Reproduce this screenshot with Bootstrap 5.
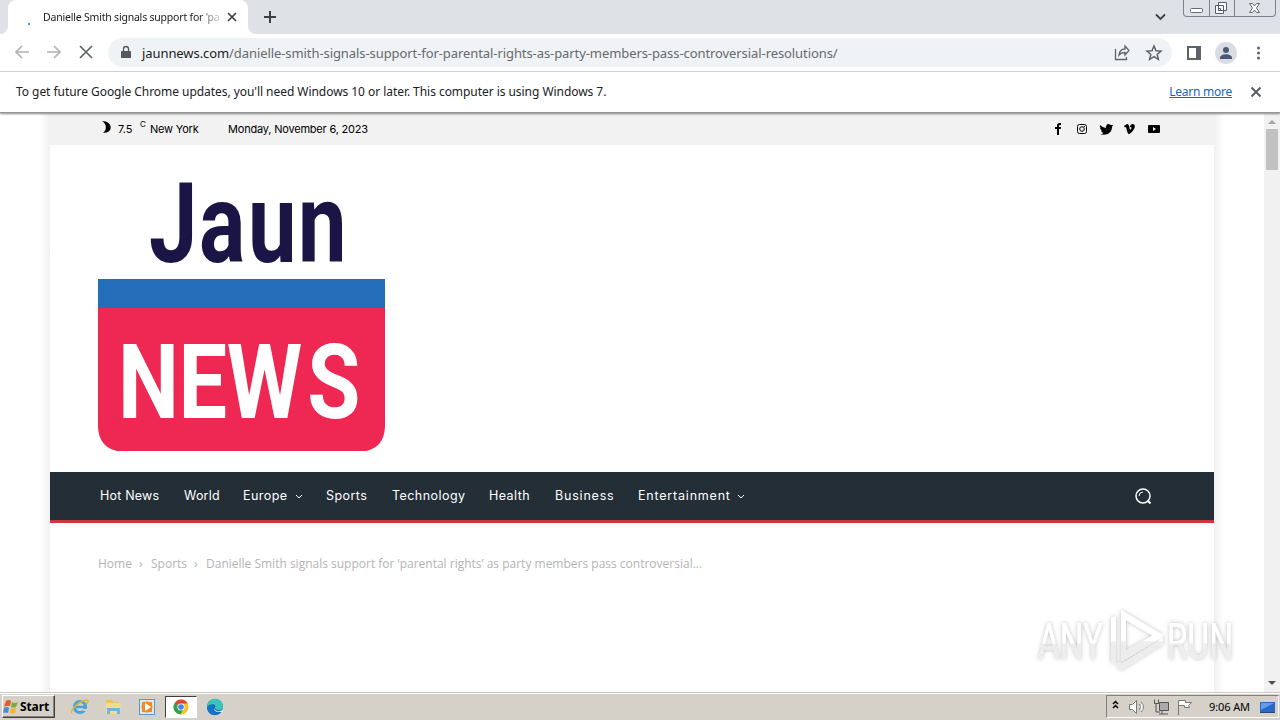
<!DOCTYPE html>
<html lang="en">
<head>
    <meta charset="UTF-8">
    <meta name="viewport" content="width=device-width, initial-scale=1.0">
    <title>Jaun News</title>
    <link href="https://cdn.jsdelivr.net/npm/bootstrap@5.3.2/dist/css/bootstrap.min.css" rel="stylesheet">
    <style>
        body {
            width: 1280px;
            height: 720px;
            overflow: hidden;
            background: #fff;
            font-family: "Noto Sans", sans-serif;
            font-size: 12px;
            line-height: 16px;
            color: #202124;
            white-space: nowrap;
        }
        svg { display: block; flex: none; overflow: visible; }

        /* browser window */
        .tab-strip { height: 34px; background: #dee1e6; }
        .browser-tab { width: 240px; height: 34px; background: #fff; border-radius: 8px 8px 0 0; padding: 0 8px 0 16px; }
        .tab-title { width: 179px; font-size: 10.5px; letter-spacing: -.2px; -webkit-mask-image: linear-gradient(90deg, #000 156px, rgba(0, 0, 0, .25) 175px); }
        .window-btns { width: 93px; height: 17px; border: 1px solid #7e828a; border-top: 0; border-radius: 0 0 4px 4px; margin-right: 4px; }
        .window-btns > div { height: 16px; }
        .window-btns > div + div { border-left: 1px solid #7e828a; }
        .toolbar { height: 38px; border-bottom: 1px solid #d5d7da; }
        .address { width: 1064px; height: 29px; background: #f0f3f5; border-radius: 15px; margin-left: 14px; padding: 0 8px 0 12px; font-size: 13px; color: #66696d; }
        .address-text { letter-spacing: -.08px; margin-left: 10px; }
        .address-text b { font-weight: 400; color: #202124; }
        .side-panel { margin-left: 15px; }
        .avatar { width: 22px; height: 22px; border-radius: 50%; background: #dadce4; overflow: hidden; margin-left: 14px; }
        .update-bar { height: 41px; padding-left: 16px; border-bottom: 1px solid #969696; font-size: 12px; letter-spacing: -.05px; box-shadow: 0 1px 2px #0007; z-index: 2; position: relative; }
        .update-bar a { color: #1967c0; letter-spacing: -.25px; }

        /* page */
        .viewport { height: 579px; overflow: hidden; background: #fff; }
        .side-shade { width: 50px; background: linear-gradient(90deg, #fff 40px, #f1f1f1 50px); }
        .side-shade.end { background: linear-gradient(270deg, #fff 40px, #f1f1f1 50px); }
        .site { width: 1164px; }
        .top-line { height: 32px; background: #f2f2f2; padding: 0 54px 0 52px; font-family: Inter, sans-serif; font-size: 11px; color: #000; letter-spacing: -.2px; }
        .weather { width: 22px; margin-left: 7px; letter-spacing: 0; }
        .degree { width: 10px; font-size: 8px; top: -5px; }
        .city { width: 78px; }
        .brand-area { height: 327px; padding: 14px 0 0 48px; }
        .site-nav { height: 51px; background: #242e36; border-bottom: 3px solid #d03638; padding: 0 62px 0 50px; font-family: Inter, sans-serif; font-size: 12.5px; color: #fff; }
        .nav-items { display: grid; grid-template-columns: 84px 59px 83px 66px 97px 66px 83px 110px; letter-spacing: .45px; }
        .nav-items .wider { letter-spacing: .8px; }
        .nav-items .tighter { letter-spacing: .2px; }
        .crumbs { margin: 33px 0 0 48px; font-family: "Open Sans", sans-serif; font-size: 12px; color: #b4b4b4; }
        .crumb-home { width: 41px; }
        .crumb-sport { width: 43px; }
        .crumb-sep { width: 12px; }
        .scroll-track { width: 16px; background: #f1f1f1; }
        .scroll-thumb { width: 12px; height: 41px; background: #c1c1c1; }
        .watermark { position: absolute; left: 1030px; top: 600px; }

        /* taskbar */
        .taskbar { height: 28px; background: #d5d0c8; border-top: 1px solid #c8c8c4; box-shadow: inset 0 1px #fff; padding: 0 1px 0 2px; }
        .start-btn { width: 53px; height: 23px; border: 1px solid; border-color: #fff #404040 #404040 #fff; box-shadow: inset -1px -1px #878480; font-size: 12px; font-weight: 700; color: #000; letter-spacing: -.1px; }
        .active-task { width: 32px; height: 22px; background: #fff; border: 1px solid; border-color: #404040 #fff #fff #404040; }
        .tray { width: 173px; height: 23px; border: 1px solid; border-color: #85827c #fff #fff #85827c; padding: 0 2px 0 6px; font-size: 11px; color: #000; }
        .clock { margin-left: 4px; letter-spacing: -.1px; }
    </style>
</head>
<body class="d-flex flex-column">
    <header>
        <div class="tab-strip d-flex">
            <div class="d-flex align-items-end"><svg width="8" height="8"><path d="M8 0v8H0a8 8 0 0 0 8-8z" fill="#fff"/></svg></div>
            <div class="browser-tab d-flex align-items-center">
                <svg width="19" height="34"><path d="M4 23h2v2H4z" fill="#4a94dd"/></svg>
                <div class="tab-title">Danielle Smith signals support for 'pa</div>
                <svg class="ms-auto" width="16" height="34"><path d="m4 13 8 8m0-8-8 8" stroke="#3c4043" stroke-width="1.7"/></svg>
            </div>
            <div class="d-flex align-items-end"><svg width="8" height="8"><path d="M0 0v8h8a8 8 0 0 1-8-8z" fill="#fff"/></svg></div>
            <svg width="28" height="34"><path d="M14 11v12M8 17h12" stroke="#3c4043" stroke-width="2"/></svg>
            <svg class="ms-auto" width="14" height="34"><path d="m3 14.500 4.500 4.500 4.500-4.500" fill="none" stroke="#3c4043" stroke-width="1.8"/></svg>
            <div class="window-btns d-flex ms-3">
                <div><svg width="25" height="16"><rect x="6.500" y="8.500" width="12" height="4" rx="1" fill="#fff" stroke="#656a75"/></svg></div>
                <div><svg width="24" height="16"><path d="M8.500 2.500h8v8h-8zM5.500 5.500h8v8h-8z" fill="#fff" stroke="#555b68"/><path d="M8.500 8.500h2v2h-2z" fill="none" stroke="#555b68"/></svg></div>
                <div><svg width="41" height="16"><path d="M14.500 3.500h3l2 2.500 2-2.500h3l-3 4.500 3 4.500h-3l-2-2.500-2 2.500h-3l3-4.500z" fill="#fff" stroke="#656a75"/></svg></div>
            </div>
        </div>
        <div class="toolbar d-flex align-items-center">
            <svg width="94" height="37" fill="none" stroke-width="1.7">
                <path d="M29 18H16m6-6-6 6 6 6M47 18h13m-6-6 6 6-6 6" stroke="#b1b3b5"/>
                <path d="m80 12 12 12m0-12L80 24" stroke="#5f6368"/>
            </svg>
            <div class="address d-flex align-items-center">
                <svg width="12" height="16"><path d="M2 6h8q1 0 1 1v6H1V7q0-1 1-1z" fill="#55585c"/><path d="M3.500 7V4a2.500 2.500 0 0 1 5 0v3" fill="none" stroke="#55585c" stroke-width="1.300"/></svg>
                <div class="address-text"><b>jaunnews.com</b>/danielle-smith-signals-support-for-parental-rights-as-party-members-pass-controversial-resolutions/</div>
                <svg class="ms-auto" width="50" height="20" fill="none" stroke="#5f6368" stroke-width="1.300">
                    <path d="M1.500 6v10.500h11V14M5 12c.5-4 3-6 6-6V3l4 4.500-4 4.500V9.500C8 9.500 6.500 10 5 12z"/>
                    <path d="m40 3 2 4.700 5 .4-3.800 3.300 1.200 4.900L40 13.600l-4.400 2.700 1.200-4.900L33 8.100l5-.4z" stroke-width="1.500"/>
                </svg>
            </div>
            <svg class="side-panel" width="14" height="14"><path d="M1 1h12v12H1z" fill="none" stroke="#5f6368" stroke-width="2"/><path d="M9 1h4v12H9z" fill="#5f6368"/></svg>
            <div class="avatar"><svg width="22" height="22" fill="#4c5975"><circle cx="11" cy="8" r="3"/><path d="M5 16c0-5 12-5 12 0v1H5z"/></svg></div>
            <svg class="ms-auto" width="34" height="20" fill="#5f6368"><circle cx="12.500" cy="5" r="1.500"/><circle cx="12.500" cy="10" r="1.500"/><circle cx="12.500" cy="15" r="1.500"/></svg>
        </div>
        <div class="update-bar d-flex align-items-center bg-white">
            <span>To get future Google Chrome updates, you'll need Windows 10 or later. This computer is using Windows 7.</span>
            <a class="ms-auto" href="#">Learn more</a>
            <svg width="48" height="20"><path d="m19.500 5.500 9 9m0-9-9 9" stroke="#55585c" stroke-width="1.800"/></svg>
        </div>
    </header>

    <div class="viewport d-flex">
        <div class="side-shade"></div>
        <main class="site">
            <div class="top-line d-flex align-items-center">
                <svg width="9" height="16"><path d="M0 0c11 0 12 12 1 12 4-3 4-9-1-12z"/></svg>
                <span class="weather">7.5</span><sup class="degree">C</sup><span class="city">New York</span>
                <span>Monday, November 6, 2023</span>
                <svg class="ms-auto" width="110" height="16">
                    <path d="M7 14V8H5V6h2V4.500Q7 2 9.500 2H11v2h-1q-1 0-1 1v1h2l-.3 2H9v6z"/>
                    <rect x="27.500" y="3.500" width="9" height="9" rx="2" fill="none" stroke="#000"/><circle cx="32" cy="8" r="2.300" fill="none" stroke="#000"/><path d="M34 5h1v1h-1z"/>
                    <path d="M50 4q3 3 6 3c-.5-4 3-5 4.500-3H63l-1 2c0 7-7 9-12 7 2 0 3-.5 3.500-1Q51 11 51 9.500h1.300Q50 8.500 50 7l1 .3Q49 6 50 4z"/>
                    <path d="m74 5 3-2q2 0 2.500 4l.7 2 1.300-2-.5-1-1.200.3C80 4 81.500 3 83 3c4 1 1 7-3.500 10Q78 14 77 10l-1-4-1 .5z"/>
                    <path fill-rule="evenodd" d="M99 4h10q1 0 1 1v6q0 1-1 1H99q-1 0-1-1V5q0-1 1-1zm4 2v4l3-2z"/>
                </svg>
            </div>
            <div class="brand-area">
                <svg width="288" height="306" viewBox="98 159 288 306" font-family="Roboto, sans-serif" font-weight="700">
                    <text transform="translate(149 262) scale(.78 1)" x="0 64 127 191" font-size="111" fill="#1b1545">Jaun</text>
                    <path d="M98 279h287v148q-1 20-19 24H117q-18-4-19-24z" fill="#ef2853"/>
                    <path d="M98 279h287v29H98z" fill="#246db8"/>
                    <text transform="translate(118 418) scale(.83 1)" x="0 73 131 228" font-size="104" fill="#fff">NEWS</text>
                </svg>
            </div>
            <nav class="site-nav d-flex align-items-center">
                <div class="nav-items">
                    <span class="tighter">Hot News</span><span class="tighter">World</span>
                    <span class="d-flex align-items-center">Europe<svg class="ms-2" width="6" height="16"><path d="m0 7 3 3 3-3" fill="none" stroke="#fff"/></svg></span>
                    <span>Sports</span><span>Technology</span><span>Health</span><span class="wider">Business</span>
                    <span class="wider d-flex align-items-center">Entertainment<svg class="ms-2" width="6" height="16"><path d="m-1 7 3 3 3-3" fill="none" stroke="#fff"/></svg></span>
                </div>
                <svg class="ms-auto" width="18" height="18" fill="none" stroke="#fff"><circle cx="9" cy="9" r="7" stroke-width="1.500"/><path d="m13.500 13.500 3 3" stroke-width="2"/><path d="M5 9q0-4 4-4"/></svg>
            </nav>
            <div class="crumbs d-flex">
                <span class="crumb-home">Home</span><span class="crumb-sep">›</span><span class="crumb-sport">Sports</span><span class="crumb-sep">›</span>
                <span>Danielle Smith signals support for ‘parental rights’ as party members pass controversial...</span>
            </div>
        </main>
        <div class="side-shade end"></div>
        <div class="scroll-track d-flex flex-column align-items-center">
            <svg width="16" height="16"><path d="m4 11 4-4 4 4z" fill="#a3a3a3"/></svg>
            <div class="scroll-thumb"></div>
            <svg class="mt-auto" width="16" height="18"><path d="m4 7 4 4 4-4z" fill="#505050"/></svg>
        </div>
    </div>

    <svg class="watermark" width="210" height="80">
        <defs>
            <filter id="soft" x="-10%" y="-20%" width="120%" height="140%"><feDropShadow dx="0" dy="0" stdDeviation="2" flood-color="#000" flood-opacity=".28"/></filter>
            <linearGradient id="fade" x1="0" y1="0" x2="0" y2="1"><stop offset=".52" stop-color="#fff"/><stop offset=".53" stop-color="#ededed"/></linearGradient>
        </defs>
        <g filter="url(#soft)" fill="url(#fade)">
            <text x="8" y="59" font-family="Roboto, sans-serif" font-size="50" textLength="65" lengthAdjust="spacingAndGlyphs">ANY</text>
            <text x="137" y="59" font-family="Roboto, sans-serif" font-size="50" textLength="66" lengthAdjust="spacingAndGlyphs">RUN</text>
            <path d="M86 16v48l-5-3V18zM91 10l42 25-3 5-34-20v37l-5 4zM97 50l30-17 6 4-42 25v-5zM86 64l5 6 42-26v-6L91 64v-2z"/>
        </g>
    </svg>

    <footer class="taskbar d-flex align-items-center">
        <div class="start-btn d-flex align-items-center">
            <svg width="17" height="17"><path d="M3 3q3-2 5 0L7 8Q4 7 1 9z" fill="#e55a2b"/><path d="M9 4q3 2 6 0l-2 5q-3 1-5 0z" fill="#79ad37"/><path d="M1 10q3-2 5 0l-1 5q-2-1-5 0z" fill="#4a8bd0"/><path d="M8 10q2 1 5 0l-1 5q-3 1-5 0z" fill="#efb72e"/></svg>
            <span>Start</span>
        </div>
        <svg width="110" height="22">
            <circle cx="25" cy="11" r="5.500" fill="none" stroke="#43a5dd" stroke-width="3.200"/><path d="M20 11h12" stroke="#43a5dd" stroke-width="2.500"/><path d="M28 13h5v2h-5z" fill="#d5d0c8"/><path d="M17 17c-3-1 6-12 15-13 2 0 1 3-1 4" fill="none" stroke="#e4b52e" stroke-width="1.500"/>
            <path d="M51 4h6l1 2h6v3H51z" fill="#e9c550"/><path d="M51 7h15l-1 11H51z" fill="#f6dd85"/><path d="M52 12h13v6h-3v-3h-7v3h-3z" fill="#72b5d9"/>
            <rect x="84.500" y="3.500" width="15" height="15" fill="#d8e8f5" stroke="#5b94cf"/><path d="M87 6h10v10H87z" fill="#ef8c22"/><circle cx="92" cy="11" r="5.500" fill="#ef8c22"/><path d="m90 7 6 4-6 4z" fill="#fff"/>
        </svg>
        <div class="active-task d-flex align-items-center justify-content-center">
            <svg width="16" height="16"><circle cx="8" cy="8" r="7.500" fill="#f4c428"/><path d="M8 8 1.500 4.200A7.500 7.500 0 0 1 14.700 4.500H8z" fill="#df4637"/><path d="M1.500 4.200A7.500 7.500 0 0 0 7.500 15.500L10.500 10 8 8z" fill="#31a153"/><circle cx="8" cy="8" r="3.600" fill="#fff"/><circle cx="8" cy="8" r="2.800" fill="#4383ec"/></svg>
        </div>
        <svg width="28" height="18"><circle cx="18" cy="9" r="8" fill="#1768b8"/><path d="M10 9c1-11 16-11 16 0 0 4-7 4-8 1 2-3-3-6-8-1z" fill="#3bc5ba"/><path d="M10 9c5-4 7-1 6 2 1 4 5 5 8 3-5 6-14 3-14-5z" fill="#1474ca"/><path d="M18 8q-2 4 2 5 4 1 6-2v3h-4q-7 0-4-6z" fill="#d8eaed"/></svg>
        <div class="tray d-flex align-items-center ms-auto">
            <svg width="92" height="20" fill="none" stroke="#777" stroke-width="1">
                <path d="m0 7 2.500-2.500L5 7m-5 4 2.500-2.500L5 11" stroke="#000" stroke-width="1.500"/>
                <path d="M16.500 7.500h3l4-4v13l-4-4h-3zM26 7q3 3 0 6m2-8q5 5 0 10" fill="#fff"/>
                <path d="M46.500 5.500h9v8h-9z" fill="#aaa" stroke="#555"/><path d="M41.500 2.500v4h4v-4M43 6v9h4m2-1v3m-3 0h9" stroke="#555"/>
                <path d="M65.500 18V3.500h7v2h6l-3 3 1 2h-5v-2h-6" fill="#fff"/>
            </svg>
            <span class="clock">9:06 AM</span>
            <svg class="ms-auto" width="16" height="16"><path d="M0 3h15v10H0z" fill="#2968c6"/><path d="M1 4h13L1 11z" fill="#629cec"/><path d="M0 13h15v1H0z" fill="#234b80"/></svg>
        </div>
    </footer>
    <script src="https://cdn.jsdelivr.net/npm/bootstrap@5.3.2/dist/js/bootstrap.bundle.min.js"></script>
</body>
</html>
